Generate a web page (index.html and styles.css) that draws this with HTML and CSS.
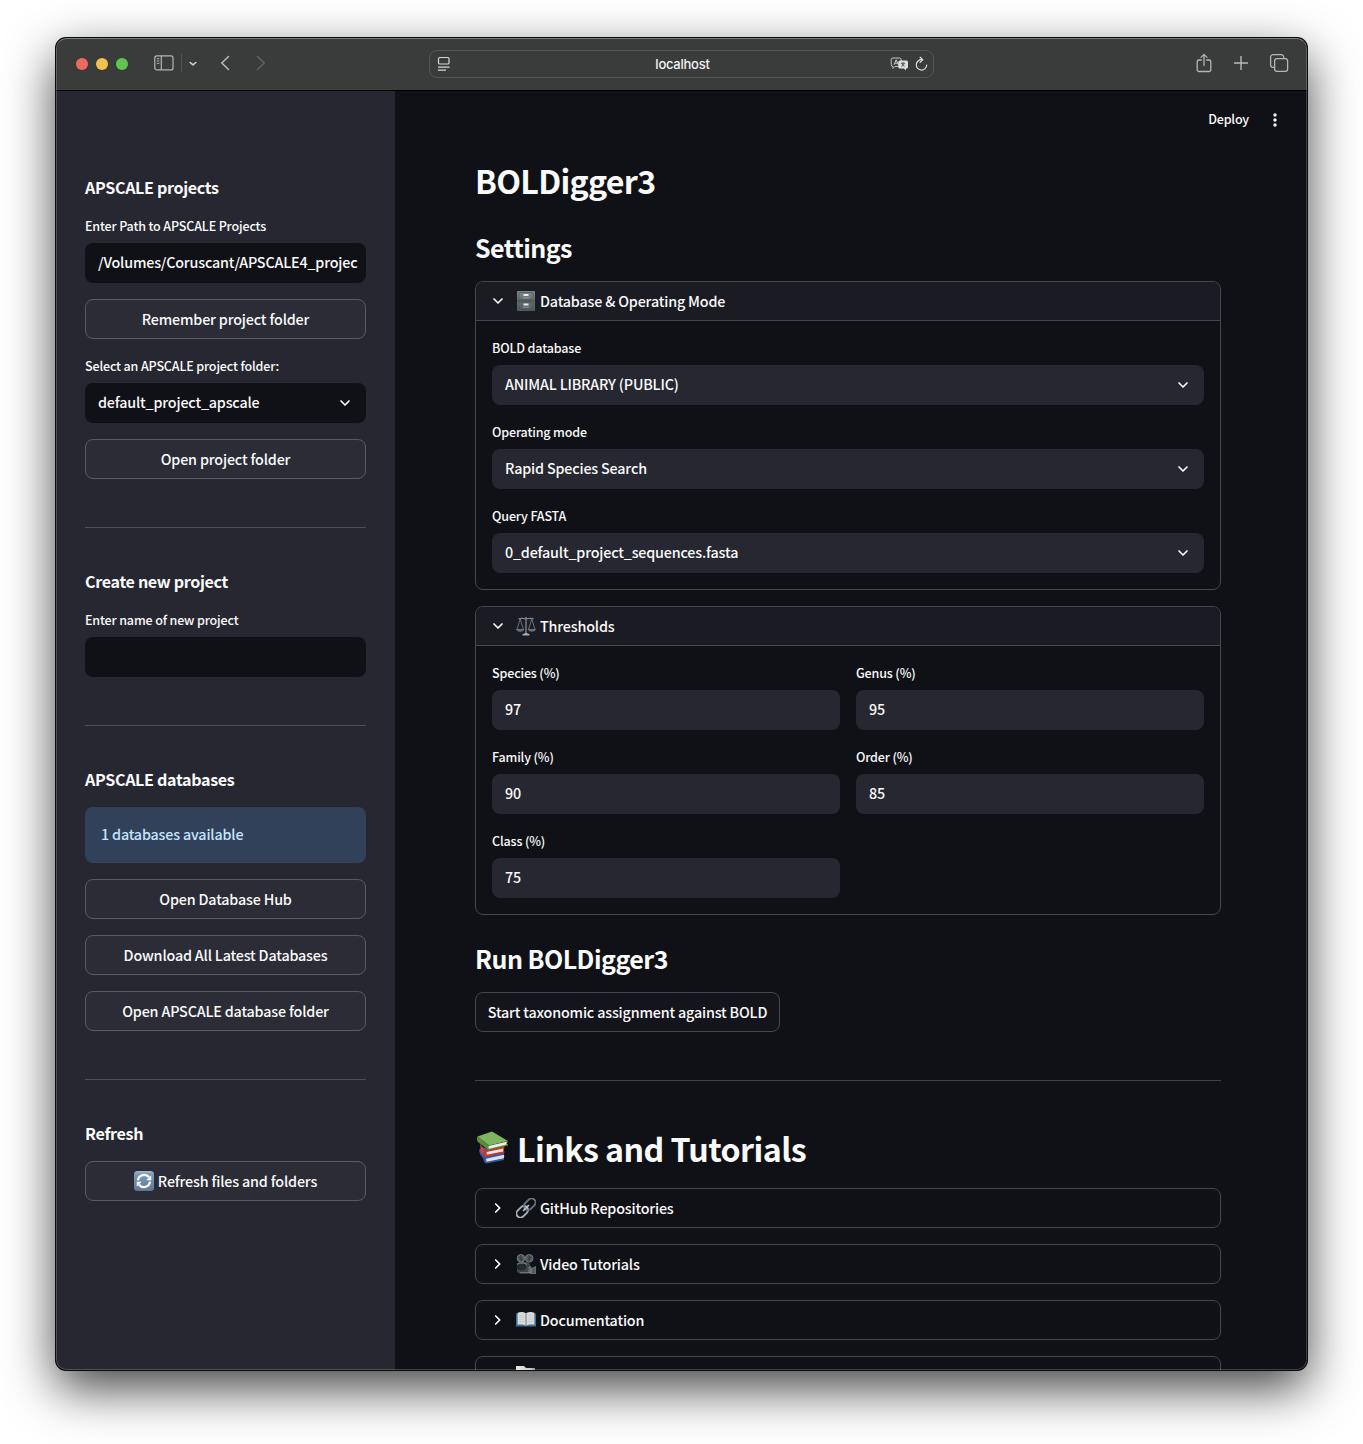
FILE: index.html
```html
<!DOCTYPE html>
<html lang="en">
<head>
<meta charset="utf-8">
<title>BOLDigger3</title>
<link rel="stylesheet" href="styles.css">
</head>
<body>
<svg width="0" height="0" class="defs">
  <defs>
    <linearGradient id="steel" x1="0" y1="0" x2="0" y2="1"><stop offset="0" stop-color="#7d8789"/><stop offset="1" stop-color="#50595b"/></linearGradient>
    <linearGradient id="blue" x1="0" y1="0" x2="0" y2="1"><stop offset="0" stop-color="#a3bcd6"/><stop offset=".15" stop-color="#7d9abb"/><stop offset="1" stop-color="#5f7896"/></linearGradient>
    <linearGradient id="page" x1="0" y1="0" x2="1" y2="0"><stop offset="0" stop-color="#e9e9ec"/><stop offset=".75" stop-color="#c9c9ce"/><stop offset="1" stop-color="#8d8d92"/></linearGradient>
    <symbol id="down" viewBox="0 0 12 12"><path d="M2 4l4 4 4-4" fill="none" stroke="#fafafa" stroke-width="1.700" stroke-linecap="round" stroke-linejoin="round"/></symbol>
    <symbol id="right" viewBox="0 0 12 12"><path d="M3.700 2l4 4-4 4" fill="none" stroke="#fafafa" stroke-width="1.700" stroke-linecap="round" stroke-linejoin="round"/></symbol>
  </defs>
</svg>
<div class="window">
  <div class="toolbar">
    <div class="lights"><i class="red"></i><i class="yellow"></i><i class="green"></i></div>
    <svg class="sidebar-icon" width="20" height="16" viewBox="0 0 20 16" fill="none" stroke="#b4b5b4" stroke-width="1.200"><rect x=".8" y=".9" width="18.200" height="14" rx="2"/><path d="M7.300 1v14"/><path d="M2.800 3.700h2.600M2.800 6h2.600M2.800 8.300h2.600" stroke-width="1"/></svg>
    <span class="divider"></span>
    <svg class="mini" width="8" height="6" viewBox="0 0 8 6"><path d="M1.200 1.500l2.800 2.400 2.800-2.400" fill="none" stroke="#cfcfcf" stroke-width="1.600" stroke-linecap="round" stroke-linejoin="round"/></svg>
    <svg class="back" width="10" height="16" viewBox="0 0 10 16"><path d="M8.500 1.500L1.800 8l6.700 6.500" fill="none" stroke="#b9bab9" stroke-width="1.500" stroke-linecap="round" stroke-linejoin="round"/></svg>
    <svg class="forward" width="10" height="16" viewBox="0 0 10 16"><path d="M1.500 1.500L8.200 8l-6.700 6.500" fill="none" stroke="#626362" stroke-width="1.500" stroke-linecap="round" stroke-linejoin="round"/></svg>
    <div class="address">
      <svg width="14" height="16" viewBox="0 0 14 16" fill="none" stroke="#d6d7d6" stroke-width="1.200"><rect x="1.500" y="1.500" width="10.500" height="6.500" rx="1.300"/><path d="M1 11.200h11.500M1 14.200h8"/></svg>
      <span class="host">localhost</span>
      <svg class="translate" width="19" height="14" viewBox="0 0 19 14"><path d="M3 1h6.500a1.700 1.700 0 0 1 1.700 1.700v5A1.700 1.700 0 0 1 9.500 9.400H5l-2 2V9.400A1.700 1.700 0 0 1 1.200 7.700v-5A1.700 1.700 0 0 1 3 1z" fill="none" stroke="#c4c5c4"/><path d="M4 7.800l2.200-5 2.200 5M4.800 6.200h2.900" fill="none" stroke="#d0d0d0"/><path d="M9.800 3.500h6.700a1.500 1.500 0 0 1 1.500 1.500v5a1.500 1.500 0 0 1-1.500 1.500H16v2l-2.200-2h-4a1.500 1.500 0 0 1-1.500-1.500V5a1.500 1.500 0 0 1 1.500-1.500z" fill="#dededd"/><path d="M11 6.300h4M13 5.200v1.100M11.300 9.300c1.600-.5 2.500-1.500 2.800-2.900M11.900 6.700c.5 1.200 1.500 2.200 2.800 2.600" stroke="#3a3c3b" stroke-width=".8" fill="none"/></svg>
      <svg width="14" height="16" viewBox="0 0 14 16" fill="none" stroke="#dadada" stroke-width="1.200" stroke-linecap="round" stroke-linejoin="round"><path d="M7.800 3.700A5.200 5.200 0 1 0 12.700 9"/><path d="M6.100 1.200l2.700 2.500-2.700 2.600"/></svg>
    </div>
    <svg class="share" width="16" height="20" viewBox="0 0 16 20" fill="none" stroke="#b4b5b4" stroke-width="1.300" stroke-linecap="round" stroke-linejoin="round"><path d="M5.400 7H3A1.800 1.800 0 0 0 1.200 8.800v7.900A1.800 1.800 0 0 0 3 18.500h10a1.800 1.800 0 0 0 1.800-1.800V8.800A1.800 1.800 0 0 0 13 7h-2.400"/><path d="M8 12.500V1.500M5 4.400l3-3 3 3"/></svg>
    <svg class="plus" width="14" height="14" viewBox="0 0 14 14"><path d="M7 .5v13M.5 7h13" stroke="#b9bab9" stroke-width="1.400" stroke-linecap="round"/></svg>
    <svg class="tabs" width="20" height="20" viewBox="0 0 20 20" fill="none" stroke="#b4b5b4" stroke-width="1.300"><rect x="5.600" y="5.600" width="13" height="12.700" rx="2.400"/><path d="M5.600 14.300H4a2.400 2.400 0 0 1-2.400-2.400V4.100A2.400 2.400 0 0 1 4 1.700h8.300a2.400 2.400 0 0 1 2.400 2.400v1.500"/></svg>
  </div>
  <div class="body">
    <aside class="sidebar">
      <h3>APSCALE projects</h3>
      <div class="field"><label>Enter Path to APSCALE Projects</label><div class="input">/Volumes/Coruscant/APSCALE4_projec</div></div>
      <div class="button">Remember project folder</div>
      <div class="field"><label>Select an APSCALE project folder:</label><div class="input">default_project_apscale<svg class="chev"><use href="#down"/></svg></div></div>
      <div class="button">Open project folder</div>
      <hr>
      <h3>Create new project</h3>
      <div class="field"><label>Enter name of new project</label><div class="input"></div></div>
      <hr>
      <h3>APSCALE databases</h3>
      <div class="alert">1 databases available</div>
      <div class="button">Open Database Hub</div>
      <div class="button">Download All Latest Databases</div>
      <div class="button">Open APSCALE database folder</div>
      <hr>
      <h3>Refresh</h3>
      <div class="button"><svg class="emoji" viewBox="0 0 20 20"><rect width="20" height="20" rx="3.500" fill="url(#blue)"/><path d="M4 9.300A6.200 6.200 0 0 1 15 6.200M16 10.700A6.200 6.200 0 0 1 5 13.800" fill="none" stroke="#fff" stroke-width="2.200"/><path d="M17.200 4.500v4.700h-5zM2.800 15.500v-4.700h5z" fill="#fff"/></svg>Refresh files and folders</div>
    </aside>
    <main class="main">
      <header class="header"><span>Deploy</span><svg width="4" height="14" viewBox="0 0 4 14" fill="#fafafa"><circle cx="2" cy="2" r="1.700"/><circle cx="2" cy="7" r="1.700"/><circle cx="2" cy="12" r="1.700"/></svg></header>
      <h1>BOLDigger3</h1>
      <h2>Settings</h2>
      <section class="expander">
        <div class="summary open"><svg class="chev"><use href="#down"/></svg><svg class="emoji" viewBox="0 0 20 20"><rect x="1" width="18" height="20" rx=".8" fill="url(#steel)"/><path d="M1 9.900h18" stroke="#394244" stroke-width=".8"/><path d="M3 1.500h14v7H3zM3 11.300h14v7H3z" fill="none" stroke="#475053" stroke-width=".6"/><path d="M7.500 3h5v2h-5zM7.500 12.500h5v2h-5z" fill="#e9eceb"/><path d="M7 6.200h6v1H7zM7 15.800h6v1H7z" fill="#8f9898"/></svg><span>Database &amp; Operating Mode</span></div>
        <div class="panel">
          <div class="field"><label>BOLD database</label><div class="input">ANIMAL LIBRARY (PUBLIC)<svg class="chev"><use href="#down"/></svg></div></div>
          <div class="field"><label>Operating mode</label><div class="input">Rapid Species Search<svg class="chev"><use href="#down"/></svg></div></div>
          <div class="field"><label>Query FASTA</label><div class="input">0_default_project_sequences.fasta<svg class="chev"><use href="#down"/></svg></div></div>
        </div>
      </section>
      <section class="expander">
        <div class="summary open"><svg class="chev"><use href="#down"/></svg><svg class="emoji" viewBox="0 0 20 20" fill="none" stroke="#7d858c" stroke-width=".8"><path d="M9.200 1h1.600v16H9.200z" fill="#6f777e" stroke="none"/><path d="M2.500 2.800c3-1.400 4.500.5 7.500-.5 3 1 4.500-.9 7.500.5" stroke-width="1.300"/><path d="M4.200 3L1 13.500M4.200 3l3.300 10.500M15.800 3l-3.300 10.500M15.800 3L19 13.500"/><path d="M.5 13.500h7.300c-.8 2.300-6.500 2.300-7.300 0zM12.200 13.500h7.300c-.8 2.300-6.500 2.300-7.300 0z" fill="#59616a"/><path d="M6.500 19.500v-1.200c1.500-.6 2-1.200 3.500-1.200s2 .6 3.500 1.200v1.200z" fill="#a2a9af" stroke="none"/></svg><span>Thresholds</span></div>
        <div class="panel grid">
          <div class="field"><label>Species (%)</label><div class="input">97</div></div>
          <div class="field"><label>Genus (%)</label><div class="input">95</div></div>
          <div class="field"><label>Family (%)</label><div class="input">90</div></div>
          <div class="field"><label>Order (%)</label><div class="input">85</div></div>
          <div class="field"><label>Class (%)</label><div class="input">75</div></div>
        </div>
      </section>
      <h2 class="run">Run BOLDigger3</h2>
      <div class="button start">Start taxonomic assignment against BOLD</div>
      <hr>
      <h1 class="links"><svg class="books" width="34" height="34" viewBox="0 0 34 34"><path d="M3 20l3-3 22 6.500.5 3.500L9 31 4 24z" fill="#3d5fa8"/><path d="M9 27.500L28 24v4.500L11 32.500c-2 0-3-3-2-5z" fill="#dcdfe6"/><path d="M8.500 26.300L28 23v1.800l-18 4 .5 3L28 28.300V30L10.500 33.500C7 33 7 28 8.500 26.300z" fill="#3559a5"/><path d="M4 13.500l5 7 19-4.500v6L9.500 26.500 5 22z" fill="#d8402f"/><path d="M10 21.500L27 18v3.800L10.500 25.300z" fill="#e9e7e4"/><path d="M9 20.500l19.500-4v1.700L10.500 22l.3 2.700 17.700-3.500v1.600L9.500 27C7 25.500 7 22 9 20.500z" fill="#c93328"/><path d="M1.500 6.500L16 1.500 32 11l-19 4.500z" fill="#7fb55f"/><path d="M1.500 6.500c-1 1.500-.8 4 .5 5.500l10.500 8L32 15.600v-1.700L13 18.200V17l18.500-4.500L32 11l-19 4.500z" fill="#5a8f40"/><path d="M13 16l18-4.200c-.6.900-.6 1.600-.2 2.700L13 18.700c-.8-.8-.8-1.800 0-2.700z" fill="#f0f1ec"/></svg>Links and Tutorials</h1>
      <section class="expander"><div class="summary"><svg class="chev"><use href="#right"/></svg><svg class="emoji" viewBox="0 0 20 20" fill="none"><g transform="rotate(-45 10 10)"><rect x="-1.800" y="6" width="13" height="8" rx="4" stroke="#a6b0b9" stroke-width="1.900"/><rect x="8.800" y="6" width="13" height="8" rx="4" stroke="#69747e" stroke-width="1.900"/><path d="M6.500 10h7" stroke="#c1c8ce" stroke-width="1.600" stroke-linecap="round"/></g></svg><span>GitHub Repositories</span></div></section>
      <section class="expander"><div class="summary"><svg class="chev"><use href="#right"/></svg><svg class="emoji" viewBox="0 0 20 20"><rect x="1" y="8" width="13" height="11.500" rx="3" fill="#3f4548"/><path d="M13 13l2-.5V19l-2-.5zM15.500 14.500L20 12.500V19.500H14.500z" fill="#555c60" stroke="#8a9195" stroke-width=".6"/><circle cx="5" cy="4.300" r="3.800" fill="#53595c" stroke="#7a8083" stroke-width=".9"/><circle cx="13.200" cy="4.300" r="3.800" fill="#53595c" stroke="#7a8083" stroke-width=".9"/><path d="M3 3l4 2.800M11.200 5.800l4-3M5 1v6.500M13.200 1v6.500" stroke="#303538" stroke-width=".9"/><ellipse cx="5.500" cy="12.800" rx="4.800" ry="3.800" fill="#242a2e"/><path d="M1 10.500c2.500-2 7.500-2 10 0M4 18.800h10" stroke="#949a9d" stroke-width=".8" fill="none"/></svg><span>Video Tutorials</span></div></section>
      <section class="expander"><div class="summary"><svg class="chev"><use href="#right"/></svg><svg class="emoji" viewBox="0 0 20 20"><path d="M0 3.500h20v13H0z" fill="#3b718f"/><path d="M1.600 2.700c3-.9 6-.9 8.400.6 2.400-1.500 5.400-1.500 8.400-.6v12c-3-.6-6-.4-8.400.9-2.400-1.300-5.400-1.500-8.400-.9z" fill="#d9dadd"/><path d="M10 3.300v12.300" stroke="#77797f" stroke-width="1"/><path d="M3.300 5.500h4.500M3.300 7.500h4.500M3.300 9.500h4.500M3.300 11.500h4.500M12.200 5.500h4.500M12.200 7.500h4.500M12.200 9.500h4.500M12.200 11.500h4.500" stroke="#c2c3c8" stroke-width=".6"/></svg><span>Documentation</span></div></section>
      <section class="expander"><div class="summary"><svg class="chev"></svg><svg class="emoji" viewBox="0 0 20 20"><path d="M0 0h8l2 2h9v15H0z" fill="url(#page)"/></svg></div></section>
    </main>
  </div>
</div>
</body>
</html>
```
FILE: styles.css
```css
* { box-sizing: border-box; }
html { background: #fff; overflow: hidden; }
body {
  margin: 0;
  padding: 38px 56px 0;
  height: 1444px;
  overflow: hidden;
  background: #fff;
  color: #fafafa;
  font: 500 14.32px/24px "Noto Sans CJK SC", "Noto Sans", sans-serif;
  letter-spacing: -.17px;
}
svg { display: block; flex: none; }
.defs { position: absolute; }
h1, h2, h3, hr { margin: 0; }

.window {
  position: relative;
  width: 1251px;
  height: 1332px;
  border-radius: 10px;
  overflow: hidden;
  background: #101116;
  box-shadow: 0 0 0 1px #0a0a0a, 0 18px 50px rgba(0, 0, 0, .75);
}
.window::after {
  content: "";
  position: absolute;
  inset: 0;
  border-radius: 10px;
  border: 1px solid rgba(255, 255, 255, .2);
  border-top-color: rgba(255, 255, 255, .35);
  pointer-events: none;
}

.toolbar {
  display: flex;
  align-items: center;
  height: 53px;
  padding: 0 18px 1px 20px;
  background: #3a3c3b;
  border-bottom: 1px solid #000;
}
.toolbar > svg, .divider { margin-bottom: 2px; }
.lights { display: flex; gap: 8px; }
.lights i { width: 12px; height: 12px; border-radius: 50%; }
.red { background: #ed6a5e; }
.yellow { background: #f5bf4f; }
.green { background: #61c554; }
.sidebar-icon { margin-left: 25.5px; }
.divider { width: 1px; height: 18px; margin-left: 7.500px; background: #525453; }
.toolbar > .mini { margin: 0 0 0 7px; }
.back { margin-left: 23px; }
.forward { margin-left: 26px; }
.address {
  display: flex;
  align-items: center;
  width: 505px;
  height: 28px;
  margin-left: 163px;
  padding: 0 5px 0 7px;
  border: 1px solid #555756;
  border-radius: 8px;
}
.host { flex: 1; padding-left: 24px; text-align: center; font: 500 13px/20px Inter, sans-serif; letter-spacing: -.25px; color: #f2f2f2; }
.translate { margin-right: 5px; }
.share { margin-left: auto; }
.plus { margin-left: 22px; }
.tabs { margin-left: 21px; }

.body { display: flex; height: 1279px; }
.sidebar {
  display: flex;
  flex-direction: column;
  gap: 16px;
  width: 339px;
  padding: 84px 29px 0;
  background: #262730;
}
h3 { height: 24px; font-size: 16.1px; line-height: 25px; font-weight: 700; letter-spacing: -.33px; }
.field { display: flex; flex-direction: column; gap: 4px; }
label { height: 24px; font-size: 12.53px; line-height: 22px; letter-spacing: -.15px; }
.input {
  display: flex;
  align-items: center;
  justify-content: space-between;
  height: 40px;
  padding: 0 15px 2px 13px;
  border-radius: 8px;
  background: #262730;
  white-space: nowrap;
}
.sidebar .input { background: #101116; }
.chev { width: 12px; height: 12px; }
.input .chev { margin-top: 2px; }
.button {
  display: flex;
  align-items: center;
  justify-content: center;
  gap: 4px;
  height: 40px;
  border: 1px solid #5a5b62;
  border-radius: 8px;
  background: #2b2c36;
}
.emoji { width: 20px; height: 20px; }
hr { width: 100%; height: 1px; border: 0; background: #4e4f56; }
.sidebar hr { margin: 32px 0 25px; }
.alert { height: 56px; padding: 15px 16px; border-radius: 8px; background: #31415a; color: #c4e4fd; }

.main {
  display: flex;
  flex-direction: column;
  flex: 1;
  overflow: hidden;
  padding: 0 86px 0 80px;
}
.main > * { flex: none; }
.header { display: flex; align-items: center; justify-content: flex-end; gap: 24px; height: 58px; margin-right: -56px; font-size: 12.53px; }
.header span { margin-bottom: 2px; }
h1 { height: 44px; margin-top: 11px; font-size: 32.2px; line-height: 40px; font-weight: 700; letter-spacing: -.72px; }
h2 { height: 32px; margin: 29px 0 16px; font-size: 25px; line-height: 28px; font-weight: 700; letter-spacing: -.54px; }
.expander { margin-bottom: 16px; border: 1px solid #46474c; border-radius: 8px; overflow: hidden; }
.summary { display: flex; align-items: center; height: 38px; padding-left: 16px; }
.summary .emoji { margin: 0 4px 0 12px; }
.open { height: 39px; background: #1a1b23; border-bottom: 1px solid #46474c; }
.panel { display: grid; gap: 16px; padding: 16px; }
.grid { grid-template-columns: 1fr 1fr; }
.run { margin-top: 13px; }
.start { width: 305px; background: #14151c; border-color: #46474c; }
.main hr { margin: 48px 0 47px; background: #414248; }
.links { display: flex; align-items: center; gap: 8px; height: 40px; margin: 0 0 20px; letter-spacing: -.6px; }
.books { margin: 0 -1px 3px 1px; }
```
